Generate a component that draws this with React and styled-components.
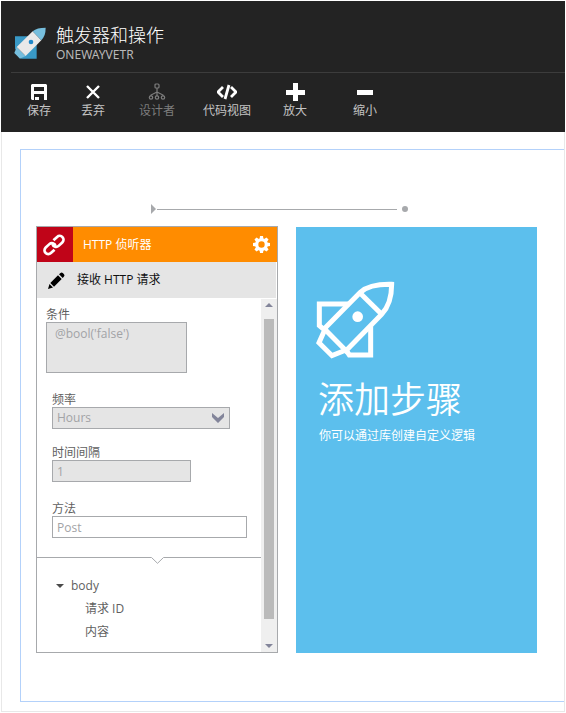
import React from "react";
import styled, { createGlobalStyle } from "styled-components";

const GlobalStyle = createGlobalStyle`
  * { box-sizing: border-box; }
  body {
    margin: 0;
    background: #fff;
    font-family: "Open Sans", "Noto Sans CJK SC", sans-serif;
    font-size: 12px;
    line-height: 16px;
  }
  button, input, select, textarea { font: inherit; }
`;

const Page = styled.div`
  display: flex;
  flex-direction: column;
  margin: 1px;
`;

const Header = styled.header`
  padding: 19px 0 12px 10px;
  background: #232323;
  color: #fff;
`;

const Brand = styled.div`
  display: flex;
  align-items: center;
  gap: 10px;
  height: 53px;
  padding: 0 0 7px 3px;
  border-bottom: 1px solid #3c3c3c;
`;

const Title = styled.h1`
  margin: 0;
  font-size: 18px;
  font-weight: 300;
  line-height: 24px;
`;

const Subtitle = styled.div`
  color: #b8b8b8;
  font-family: "Noto Sans", sans-serif;
  font-size: 12px;
  line-height: 16px;
`;

const Toolbar = styled.nav`
  display: grid;
  grid-template-columns: 54px 54px 74px 66px 70px 70px;
  padding: 10px 0 0 1px;
`;

const ToolButton = styled.button`
  display: flex;
  flex-direction: column;
  align-items: center;
  padding: 0;
  border: 0;
  background: none;
  color: ${(p) => (p.disabled ? "#7d7d7d" : "#fff")};
`;

const ToolLabel = styled.span`
  margin-top: 1px;
  color: ${(p) => (p.$muted ? "#7d7d7d" : "#c4c4c4")};
  line-height: 18px;
  white-space: nowrap;
`;

const Workspace = styled.main`
  padding: 17px 0 9px 18px;
  border: 1px solid #e8e8e8;
  border-top: 0;
`;

const Canvas = styled.section`
  padding: 53px 27px 48px 15px;
  border: 1px solid #b3d1fa;
  border-right: 0;
`;

const Connector = styled.div`
  display: flex;
  align-items: center;
  width: 257px;
  height: 12px;
  margin: 0 0 11px 115px;
`;

const ConnectorLine = styled.div`
  flex: 1;
  height: 1px;
  margin: 0 5px 0 1px;
  background: #a7a9ac;
`;

const Cards = styled.div`
  display: grid;
  grid-template-columns: 242px minmax(0, 1fr);
  gap: 18px;
`;

const ListenerCard = styled.article`
  border: 1px solid #a7a9ac;
  background: #fff;
`;

const CardHeader = styled.header`
  display: flex;
  align-items: center;
  height: 35px;
  background: #ff8c00;
  color: #fff;
`;

const LinkTile = styled.div`
  display: grid;
  place-items: center;
  width: 36px;
  height: 35px;
  background: #c00418;
`;

const CardTitle = styled.h2`
  flex: 1;
  margin: 0 0 0 10px;
  font-size: 12px;
  font-weight: 400;
`;

const IconButton = styled.button`
  display: flex;
  margin-right: 7px;
  padding: 0;
  border: 0;
  background: none;
  color: #fff;
`;

const ActionRow = styled.div`
  display: flex;
  align-items: center;
  gap: 12px;
  height: 36px;
  margin-right: 1px;
  padding-left: 11px;
  background: #e5e5e5;
  color: #111;
`;

const CardBody = styled.div`
  display: flex;
`;

const Content = styled.div`
  flex: 1;
  min-width: 0;
  color: #5f5f5f;
`;

const Form = styled.form`
  padding: 10px 14px 19px 15px;
`;

const Field = styled.div`
  display: flex;
  flex-direction: column;
  width: ${(p) => p.$width};
  margin-bottom: ${(p) => p.$gap || 0};
  margin-left: ${(p) => (p.$outdent ? "-6px" : 0)};
`;

const Label = styled.label`
  line-height: 14px;
`;

const Input = styled.input`
  width: 100%;
  height: 22px;
  padding: 0 4px;
  border: 1px solid #a7a9ac;
  border-radius: 0;
  outline: 0;
  background: ${(p) => (p.$filled ? "#e5e5e5" : "#fff")};
  color: #a2a3a6;
`;

const TextArea = styled.textarea`
  width: 100%;
  height: 51px;
  padding: 3px 8px;
  border: 1px solid #a7a9ac;
  border-radius: 0;
  outline: 0;
  background: #e5e5e5;
  color: #a2a3a6;
  resize: none;
`;

const SelectBox = styled.div`
  display: grid;
  align-items: center;

  > * { grid-area: 1 / 1; }
  > svg { justify-self: end; margin-right: 6px; pointer-events: none; }
`;

const Select = styled.select`
  width: 100%;
  height: 22px;
  padding: 0 4px;
  border: 1px solid #a7a9ac;
  border-radius: 0;
  appearance: none;
  background: #e5e5e5;
  color: #a2a3a6;
`;

const Divider = styled.div`
  display: flex;
  height: 7px;

  &::before, &::after {
    content: "";
    flex: 1;
    border-top: 1px solid #a7a9ac;
  }
  &::before { flex: 0 0 114px; }
`;

const Tree = styled.ul`
  margin: 0;
  padding: 10px 0 9px 19px;
  list-style: none;
  line-height: 23px;

  ul { margin: 0; padding: 0 0 0 29px; list-style: none; }
`;

const TreeToggle = styled.button`
  display: flex;
  align-items: center;
  gap: 7px;
  padding: 0;
  border: 0;
  background: none;
  color: #5f5f5f;
  line-height: 23px;
`;

const ScrollTrack = styled.div`
  display: flex;
  flex-direction: column;
  align-items: center;
  justify-content: space-between;
  width: 16px;
  margin-top: 1px;
  padding: 4px 0;
  background: #efefef;
`;

const ScrollThumb = styled.div`
  flex: 1;
  width: 10px;
  margin: 12px 0 25px;
  background: #bababa;
`;

const StepCard = styled.article`
  margin-top: 1px;
  padding: 54px 20px 20px;
  background: #5cbfed;
  color: #fff;
`;

const StepTitle = styled.h2`
  margin: 14px 0 6px 2px;
  font-size: 36px;
  font-weight: 350;
  line-height: 44px;
`;

const StepText = styled.p`
  margin: 0 0 0 3px;
`;

const RocketLogo = () => (
  <svg width="32" height="32" viewBox="42 82 96 96" aria-hidden="true">
    <path d="M45 110H86L45 150ZM110 130V177H62Z" fill="#3999c6" />
    <path d="M50 142L43 160L60 177L77 169Z" fill="#76bedd" />
    <path d="M98 95L50 142L77 169L124 122Z" fill="#e9e9e9" />
    <path d="M137 84C119 84 107 87 98 95L124 122C133 112 137 101 137 84Z" fill="#76bedd" />
    <circle cx="93" cy="127" r="7" fill="#1f87c9" />
  </svg>
);

const RocketOutline = () => (
  <svg width="79" height="79" viewBox="78 64 237 237" fill="none" stroke="#fff" strokeWidth="15" aria-hidden="true">
    <path d="M305 74C264 73 232 79 211 98L103 207L168 273L275 164C297 141 305 112 305 74Z" />
    <path d="M210 100L275 164" />
    <path d="M178 133H88V198L104 211L87 249L126 288L168 271L178 286H242V200" />
    <circle cx="203" cy="171" r="16" fill="#fff" stroke="none" />
  </svg>
);

const icons = {
  save: (
    <path fillRule="evenodd" d="M3 1H17L18 2V17H15V11H5V17H3L2 16V2ZM5 4V8H15V4ZM6 14H10V17H6Z" fill="currentColor" />
  ),
  discard: <path d="M4 3L16 15M16 3L4 15" stroke="currentColor" strokeWidth="2.4" />,
  designer: (
    <g fill="none" stroke="currentColor" strokeWidth="1.2">
      <rect x="8" y="1" width="4" height="4" rx="1" />
      <path d="M10 5V13M10 9L4 12V13M10 9L16 12V13" />
      <circle cx="4" cy="14.5" r="1.7" />
      <circle cx="10" cy="14.5" r="1.7" />
      <circle cx="16" cy="14.5" r="1.7" />
    </g>
  ),
  code: (
    <path d="M6 4L1 9L6 14M14 4L19 9L14 14M12 2L8 16" fill="none" stroke="currentColor" strokeWidth="2.8" />
  ),
  zoomIn: <path d="M8 0H13V7H20V12H13V18H8V12H1V7H8Z" fill="currentColor" />,
  zoomOut: <path d="M2 7H18V12H2Z" fill="currentColor" />,
};

const tools = [
  { icon: "save", label: "保存" },
  { icon: "discard", label: "丢弃" },
  { icon: "designer", label: "设计者", disabled: true },
  { icon: "code", label: "代码视图" },
  { icon: "zoomIn", label: "放大" },
  { icon: "zoomOut", label: "缩小" },
];

const LinkIcon = () => (
  <svg width="24" height="24" viewBox="0 0 24 24" fill="none" stroke="#fff" strokeWidth="2.7" aria-hidden="true">
    <g transform="translate(-1 0) rotate(-43 12 12)">
      <path d="M9.2 15.8H4.2A3.8 3.8 0 0 1 4.2 8.2H9.2A3.8 3.8 0 0 1 12.6 13.7" />
      <path d="M14.8 8.2H19.8A3.8 3.8 0 0 1 19.8 15.8H14.8A3.8 3.8 0 0 1 11.4 10.3" />
    </g>
  </svg>
);

const PencilIcon = () => (
  <svg width="17" height="17" viewBox="0 0 17 17" aria-hidden="true">
    <path d="M0 17L1.5 12L5 15.5ZM2.3 11L10 3.3L13.7 7L6 14.7ZM11 2.3L12.5 0.9Q13.7 0 14.8 1L16 2.2Q17 3.4 16 4.6L14.7 6Z" fill="#000" />
  </svg>
);

const teeth = [0, 45, 90, 135, 180, 225, 270, 315];
const GearIcon = () => (
  <svg width="17" height="17" viewBox="-8 -8 16 16" aria-hidden="true">
    <circle r="4.5" fill="none" stroke="currentColor" strokeWidth="3" />
    {teeth.map((a) => (
      <path key={a} d="M-1.9 -5L-1.4 -8H1.4L1.9 -5Z" fill="currentColor" transform={`rotate(${a})`} />
    ))}
  </svg>
);

const Triangle = ({ up, color }) => (
  <svg width="8" height="4" viewBox="0 0 8 4" aria-hidden="true">
    <path d={up ? "M0 4L4 0L8 4Z" : "M0 0L4 4L8 0Z"} fill={color} />
  </svg>
);

export default function App() {
  return (
    <>
      <GlobalStyle />
      <Page>
        <Header>
          <Brand>
            <RocketLogo />
            <div>
              <Title>触发器和操作</Title>
              <Subtitle>ONEWAYVETR</Subtitle>
            </div>
          </Brand>
          <Toolbar>
            {tools.map((tool) => (
              <ToolButton key={tool.icon} type="button" disabled={tool.disabled}>
                <svg width="20" height="18" viewBox="0 0 20 18" aria-hidden="true">
                  {icons[tool.icon]}
                </svg>
                <ToolLabel $muted={tool.disabled}>{tool.label}</ToolLabel>
              </ToolButton>
            ))}
          </Toolbar>
        </Header>
        <Workspace>
          <Canvas>
            <Connector>
              <svg width="5" height="10" viewBox="0 0 5 10" aria-hidden="true">
                <path d="M0 0L5 5L0 10Z" fill="#a7a9ac" />
              </svg>
              <ConnectorLine />
              <svg width="6" height="6" viewBox="0 0 6 6" aria-hidden="true">
                <circle cx="3" cy="3" r="3" fill="#a7a9ac" />
              </svg>
            </Connector>
            <Cards>
              <ListenerCard>
                <CardHeader>
                  <LinkTile>
                    <LinkIcon />
                  </LinkTile>
                  <CardTitle>HTTP 侦听器</CardTitle>
                  <IconButton type="button" aria-label="设置">
                    <GearIcon />
                  </IconButton>
                </CardHeader>
                <ActionRow>
                  <PencilIcon />
                  接收 HTTP 请求
                </ActionRow>
                <CardBody>
                  <Content>
                    <Form>
                      <Field $width="141px" $gap="20px" $outdent>
                        <Label htmlFor="condition">条件</Label>
                        <TextArea id="condition" readOnly value="@bool('false')" />
                      </Field>
                      <Field $width="178px" $gap="17px">
                        <Label htmlFor="frequency">频率</Label>
                        <SelectBox>
                          <Select id="frequency" defaultValue="Hours">
                            <option>Hours</option>
                          </Select>
                          <svg width="12" height="10" viewBox="0 0 12 10" aria-hidden="true">
                            <path d="M0 0L6 5L12 0V4L6 10L0 4Z" fill="#83859a" />
                          </svg>
                        </SelectBox>
                      </Field>
                      <Field $width="139px" $gap="20px">
                        <Label htmlFor="interval">时间间隔</Label>
                        <Input id="interval" $filled readOnly value="1" />
                      </Field>
                      <Field $width="100%">
                        <Label htmlFor="method">方法</Label>
                        <Input id="method" defaultValue="Post" />
                      </Field>
                    </Form>
                    <Divider>
                      <svg width="13" height="7" viewBox="0 0 13 7" fill="none" stroke="#a7a9ac" aria-hidden="true">
                        <path d="M0 0.5H0.5L6.5 6.3L12.5 0.5H13" />
                      </svg>
                    </Divider>
                    <Tree>
                      <li>
                        <TreeToggle type="button" aria-expanded="true">
                          <Triangle color="#4a4a4a" />
                          body
                        </TreeToggle>
                        <ul>
                          <li>请求 ID</li>
                          <li>内容</li>
                        </ul>
                      </li>
                    </Tree>
                  </Content>
                  <ScrollTrack>
                    <Triangle up color="#83859a" />
                    <ScrollThumb />
                    <Triangle color="#83859a" />
                  </ScrollTrack>
                </CardBody>
              </ListenerCard>
              <StepCard>
                <RocketOutline />
                <StepTitle>添加步骤</StepTitle>
                <StepText>你可以通过库创建自定义逻辑</StepText>
              </StepCard>
            </Cards>
          </Canvas>
        </Workspace>
      </Page>
    </>
  );
}
